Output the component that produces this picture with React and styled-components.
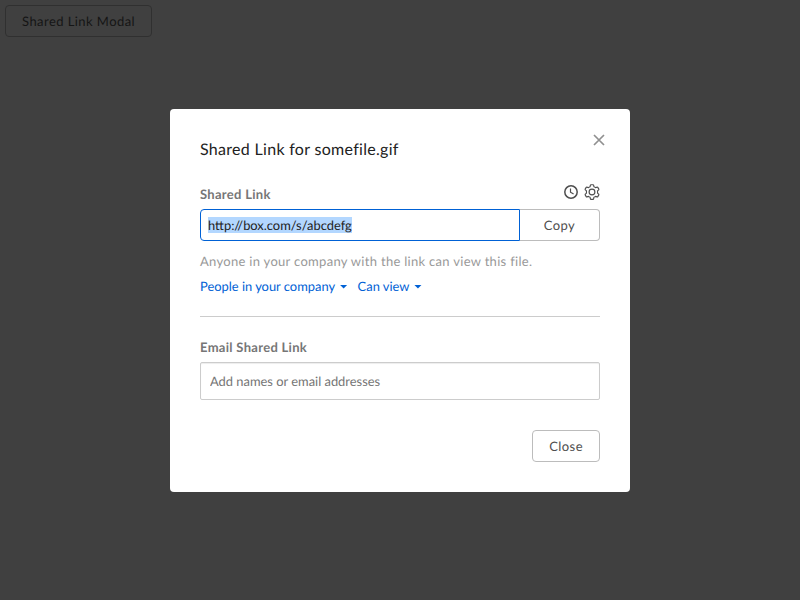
import React, { useEffect, useRef } from 'react';
import styled, { createGlobalStyle } from 'styled-components';

const GlobalStyle = createGlobalStyle`
  * { box-sizing: border-box; }
  body {
    margin: 0;
    background: #404040;
    color: #222;
    font: 400 13px/20px Lato, sans-serif;
    letter-spacing: 0.3px;
    text-rendering: geometricPrecision;
    overflow: hidden;
  }
  button, input { text-rendering: inherit; }
`;

const Page = styled.main`
  height: 600px;
  padding: 5px;
`;

const Button = styled.button`
  height: 32px;
  padding: 0 16px;
  border: 1px solid ${(p) => (p.$dimmed ? '#303030' : '#bcbcbc')};
  border-radius: 4px;
  background: ${(p) => (p.$dimmed ? 'transparent' : '#fff')};
  color: ${(p) => (p.$dimmed ? '#151515' : '#4e4e4e')};
  font: inherit;
  letter-spacing: 0.44px;
  white-space: nowrap;
`;

const CopyButton = styled(Button)`
  width: 80px;
  border-left: 0;
  border-radius: 0 4px 4px 0;
`;

const Backdrop = styled.div`
  position: fixed;
  inset: 0;
  display: flex;
  justify-content: center;
  align-items: flex-start;
  padding-top: 109px;
`;

const Dialog = styled.section`
  position: relative;
  display: flex;
  flex-direction: column;
  width: 460px;
  height: 383px;
  padding: 30px;
  border-radius: 4px;
  background: #fff;
`;

const DismissButton = styled.button`
  position: absolute;
  top: 24px;
  right: 24px;
  width: 14px;
  height: 14px;
  padding: 0;
  border: 0;
  background: none;
  svg { display: block; }
`;

const Title = styled.h2`
  margin: 1px 0 24px;
  font-size: 16px;
  font-weight: 400;
  line-height: 20px;
`;

const LabelRow = styled.div`
  display: flex;
  justify-content: space-between;
  height: 20px;
  margin-bottom: 5px;
`;

const Label = styled.label`
  color: #767676;
  font-weight: 700;
`;

const Icons = styled.div`
  display: flex;
  gap: 5px;
`;

const LinkRow = styled.div`
  display: flex;
  height: 32px;
`;

const LinkInput = styled.input`
  width: 320px;
  height: 32px;
  padding: 0 7px;
  border: 1px solid #0061d5;
  border-radius: 4px 0 0 4px;
  outline: none;
  background: #fff;
  color: #222;
  font: inherit;
  font-size: 12.9px;
  letter-spacing: normal;
  &::selection { background: #b3d7ff; color: #222; }
`;

const Description = styled.p`
  margin: 10px 0 5px;
  color: #999;
`;

const Menus = styled.div`
  display: flex;
  gap: 10px;
`;

const MenuButton = styled.button`
  display: flex;
  align-items: center;
  gap: 4.5px;
  height: 20px;
  padding: 0;
  border: 0;
  background: none;
  color: #0061d5;
  font: inherit;
  font-size: 12.9px;
  letter-spacing: normal;
`;

const Caret = styled.span`
  width: 8px;
  height: 4px;
  margin-top: 1px;
  background: #0061d5;
  clip-path: polygon(0 0, 100% 0, 50% 100%);
`;

const Divider = styled.hr`
  width: 100%;
  height: 1px;
  margin: 20px 0;
  border: 0;
  background: #ccc;
`;

const EmailInput = styled.input`
  width: 400px;
  height: 38px;
  padding: 0 9px;
  border: 1px solid #ccc;
  border-radius: 2px;
  background: #fff;
  box-shadow: inset 0 1px 1px rgba(0, 0, 0, 0.075);
  font: inherit;
  font-size: 12.9px;
  letter-spacing: normal;
  &::placeholder { color: #757575; opacity: 1; }
`;

const Footer = styled.footer`
  display: flex;
  justify-content: flex-end;
  margin-top: 30px;
`;

const CloseIcon = () => (
  <svg width="14" height="14" viewBox="0 0 14 14" fill="none" stroke="#909090" strokeWidth="1.7">
    <path d="M2 2l10 10M12 2L2 12" />
  </svg>
);

const ClockIcon = () => (
  <svg width="16" height="16" viewBox="0 0 16 16" fill="none" stroke="#4e4e4e">
    <circle cx="8" cy="8" r="6.2" strokeWidth="1.5" />
    <path d="M7.5 4.5V8.2L10.6 10" strokeWidth="1.2" />
  </svg>
);

const GearIcon = () => (
  <svg width="16" height="16" viewBox="0 0 16 16" fill="none" stroke="#4e4e4e" strokeWidth="1.15" strokeLinejoin="round">
    <path d="M6.4 1.2Q6.5.7 7 .7H9Q9.5.7 9.6 1.2L9.9 2.7Q10.8 3 11.5 3.6L13 3.1Q13.5 2.9 13.8 3.4L14.8 5.1Q15 5.5 14.7 5.9L13.5 6.9Q13.7 8 13.5 9.1L14.7 10.1Q15 10.5 14.8 10.9L13.8 12.6Q13.5 13.1 13 12.9L11.5 12.4Q10.8 13 9.9 13.3L9.6 14.8Q9.5 15.3 9 15.3H7Q6.5 15.3 6.4 14.8L6.1 13.3Q5.2 13 4.5 12.4L3 12.9Q2.5 13.1 2.2 12.6L1.2 10.9Q1 10.5 1.3 10.1L2.5 9.1Q2.3 8 2.5 6.9L1.3 5.9Q1 5.5 1.2 5.1L2.2 3.4Q2.5 2.9 3 3.1L4.5 3.6Q5.2 3 6.1 2.7Z" />
    <circle cx="8" cy="8" r="2.9" />
  </svg>
);

export default function App() {
  const link = useRef(null);

  useEffect(() => {
    link.current.focus();
    link.current.select();
  }, []);

  return (
    <>
      <GlobalStyle />
      <Page>
        <Button $dimmed>Shared Link Modal</Button>
      </Page>
      <Backdrop>
        <Dialog role="dialog" aria-labelledby="dialog-title">
          <DismissButton aria-label="Close dialog"><CloseIcon /></DismissButton>
          <Title id="dialog-title">Shared Link for somefile.gif</Title>
          <LabelRow>
            <Label htmlFor="link">Shared Link</Label>
            <Icons><ClockIcon /><GearIcon /></Icons>
          </LabelRow>
          <LinkRow>
            <LinkInput id="link" ref={link} readOnly value="http://box.com/s/abcdefg" />
            <CopyButton>Copy</CopyButton>
          </LinkRow>
          <Description>Anyone in your company with the link can view this file.</Description>
          <Menus>
            <MenuButton>People in your company<Caret /></MenuButton>
            <MenuButton>Can view<Caret /></MenuButton>
          </Menus>
          <Divider />
          <LabelRow>
            <Label htmlFor="email">Email Shared Link</Label>
          </LabelRow>
          <EmailInput id="email" placeholder="Add names or email addresses" />
          <Footer><Button>Close</Button></Footer>
        </Dialog>
      </Backdrop>
    </>
  );
}
